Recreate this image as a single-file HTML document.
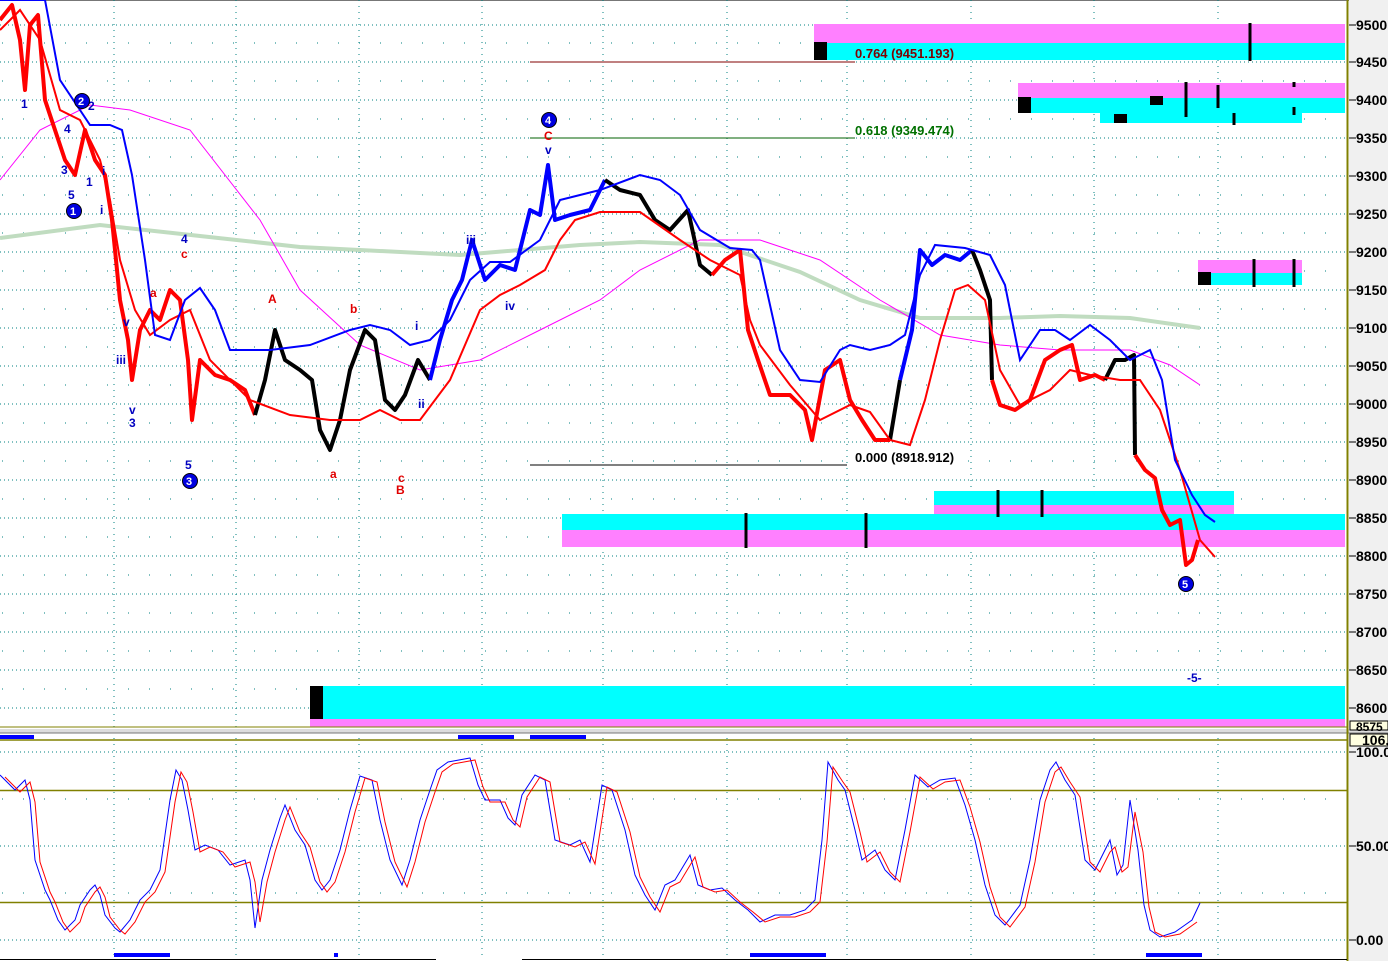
<!DOCTYPE html>
<html><head><meta charset="utf-8"><style>
html,body{margin:0;padding:0;background:#fff;width:1388px;height:961px;overflow:hidden}
svg{display:block;font-family:"Liberation Sans",sans-serif}
</style></head><body>
<svg width="1388" height="961" viewBox="0 0 1388 961" xmlns="http://www.w3.org/2000/svg">
<rect x="0" y="0" width="1388" height="961" fill="#fff"/>
<rect x="1349" y="0" width="39" height="961" fill="#f0f0f0"/>
<line x1="0" y1="0.5" x2="1349" y2="0.5" stroke="#777" stroke-width="1"/>
<g stroke="#008080" stroke-width="1" stroke-dasharray="1,3">
<line x1="0" y1="25" x2="1345" y2="25"/><line x1="0" y1="62" x2="1345" y2="62"/><line x1="0" y1="100" x2="1345" y2="100"/><line x1="0" y1="138" x2="1345" y2="138"/><line x1="0" y1="176" x2="1345" y2="176"/><line x1="0" y1="214" x2="1345" y2="214"/><line x1="0" y1="252" x2="1345" y2="252"/><line x1="0" y1="290" x2="1345" y2="290"/><line x1="0" y1="328" x2="1345" y2="328"/><line x1="0" y1="366" x2="1345" y2="366"/><line x1="0" y1="404" x2="1345" y2="404"/><line x1="0" y1="442" x2="1345" y2="442"/><line x1="0" y1="480" x2="1345" y2="480"/><line x1="0" y1="518" x2="1345" y2="518"/><line x1="0" y1="556" x2="1345" y2="556"/><line x1="0" y1="594" x2="1345" y2="594"/><line x1="0" y1="632" x2="1345" y2="632"/><line x1="0" y1="670" x2="1345" y2="670"/><line x1="0" y1="708" x2="1345" y2="708"/>
<line x1="0" y1="752" x2="1345" y2="752"/><line x1="0" y1="846" x2="1345" y2="846"/><line x1="0" y1="940" x2="1345" y2="940"/>
</g>
<g stroke="#008080" stroke-width="1" stroke-dasharray="1,5">
<line x1="114" y1="0" x2="114" y2="958"/><line x1="236" y1="0" x2="236" y2="958"/><line x1="359" y1="0" x2="359" y2="958"/><line x1="482" y1="0" x2="482" y2="958"/><line x1="603" y1="0" x2="603" y2="958"/><line x1="727" y1="0" x2="727" y2="958"/><line x1="847" y1="0" x2="847" y2="958"/><line x1="971" y1="0" x2="971" y2="958"/><line x1="1094" y1="0" x2="1094" y2="958"/><line x1="1218" y1="0" x2="1218" y2="958"/>
</g>
<g stroke="#008080" stroke-width="1" stroke-dasharray="1,20">
<line x1="2" y1="43" x2="1345" y2="43"/><line x1="2" y1="81" x2="1345" y2="81"/><line x1="2" y1="119" x2="1345" y2="119"/><line x1="2" y1="157" x2="1345" y2="157"/><line x1="2" y1="195" x2="1345" y2="195"/><line x1="2" y1="233" x2="1345" y2="233"/><line x1="2" y1="271" x2="1345" y2="271"/><line x1="2" y1="309" x2="1345" y2="309"/><line x1="2" y1="347" x2="1345" y2="347"/><line x1="2" y1="385" x2="1345" y2="385"/><line x1="2" y1="423" x2="1345" y2="423"/><line x1="2" y1="461" x2="1345" y2="461"/><line x1="2" y1="499" x2="1345" y2="499"/><line x1="2" y1="537" x2="1345" y2="537"/><line x1="2" y1="575" x2="1345" y2="575"/><line x1="2" y1="613" x2="1345" y2="613"/><line x1="2" y1="651" x2="1345" y2="651"/><line x1="2" y1="689" x2="1345" y2="689"/>
<line x1="2" y1="799" x2="1345" y2="799"/><line x1="2" y1="893" x2="1345" y2="893"/>
</g>
<rect x="814" y="24" width="531" height="19" fill="#ff80ff"/><rect x="814" y="43" width="531" height="17" fill="#00ffff"/><rect x="814" y="42" width="13" height="18" fill="#000"/>
<line x1="1250" y1="23" x2="1250" y2="61" stroke="#000" stroke-width="3"/>
<rect x="1018" y="83" width="327" height="15" fill="#ff80ff"/><rect x="1030" y="98" width="315" height="15" fill="#00ffff"/><rect x="1100" y="113" width="202" height="10" fill="#00ffff"/>
<rect x="1018" y="97" width="13" height="16" fill="#000"/><rect x="1150" y="96" width="13" height="9" fill="#000"/><rect x="1114" y="114" width="13" height="9" fill="#000"/>
<g stroke="#000" stroke-width="3"><line x1="1186" y1="82" x2="1186" y2="117"/><line x1="1218" y1="85" x2="1218" y2="108"/><line x1="1234" y1="113" x2="1234" y2="125"/><line x1="1294" y1="82" x2="1294" y2="87"/><line x1="1294" y1="107" x2="1294" y2="115"/></g>
<rect x="1198" y="260" width="104" height="13" fill="#ff80ff"/><rect x="1210" y="273" width="92" height="12" fill="#00ffff"/><rect x="1198" y="272" width="13" height="13" fill="#000"/>
<g stroke="#000" stroke-width="3"><line x1="1254" y1="259" x2="1254" y2="287"/><line x1="1294" y1="259" x2="1294" y2="287"/></g>
<rect x="934" y="491" width="300" height="14" fill="#00ffff"/><rect x="934" y="505" width="300" height="10" fill="#ff80ff"/>
<rect x="562" y="514" width="783" height="16" fill="#00ffff"/><rect x="562" y="530" width="783" height="17" fill="#ff80ff"/>
<g stroke="#000" stroke-width="3"><line x1="998" y1="490" x2="998" y2="517"/><line x1="1042" y1="490" x2="1042" y2="517"/><line x1="746" y1="513" x2="746" y2="548"/><line x1="866" y1="513" x2="866" y2="548"/></g>
<rect x="310" y="686" width="1035" height="33" fill="#00ffff"/><rect x="310" y="719" width="1035" height="8" fill="#ff80ff"/><rect x="310" y="686" width="13" height="33" fill="#000"/>
<line x1="530" y1="62" x2="855" y2="62" stroke="#800000" stroke-width="1"/>
<line x1="530" y1="138" x2="855" y2="138" stroke="#006000" stroke-width="1"/>
<line x1="530" y1="465" x2="847" y2="465" stroke="#000" stroke-width="1"/>
<g font-size="13" font-weight="bold">
<text x="855" y="58" fill="#800000">0.764 (9451.193)</text>
<text x="855" y="135" fill="#007000">0.618 (9349.474)</text>
<text x="855" y="462" fill="#000">0.000 (8918.912)</text>
</g>
<polyline fill="none" stroke="#c0dcc0" stroke-width="4" points="0,238 100,225 200,236 300,247 460,255 580,245 640,242 720,245 800,272 860,300 920,318 1000,318 1060,316 1130,318 1200,328"/>
<polyline fill="none" stroke="#ff00ff" stroke-width="1" points="0,180 40,130 90,105 130,110 190,130 260,220 300,290 360,345 420,370 480,360 540,330 600,300 640,270 700,240 760,240 820,260 880,300 940,335 1000,345 1060,350 1130,350 1170,365 1200,385"/>
<g fill="none" stroke-width="4" stroke-linejoin="round">
<polyline stroke="#ff0000" points="0,20 12,5 20,40 25,90 30,25 38,15 45,100 55,130 65,160 75,175 85,130 95,160 105,175 112,220 120,300 128,340 132,380 140,330 150,310 160,320 170,290 180,300 188,360 192,420 200,360 215,375 230,380 245,390 255,415"/>
<polyline stroke="#000" points="255,415 265,380 275,330 285,360 300,370 312,380 320,430 330,450 340,420 350,370 365,330 375,340 385,400 395,410 405,395 418,360 430,380"/>
<polyline stroke="#0000ff" points="430,380 440,340 452,300 462,280 472,240 485,280 500,265 515,270 530,210 540,215 548,165 555,220 570,215 590,210 605,180"/>
<polyline stroke="#000" points="605,180 620,190 640,195 655,220 670,230 688,210 700,265 712,275"/>
<polyline stroke="#ff0000" points="712,275 725,260 740,250 748,330 758,360 770,395 790,395 805,410 812,440 825,370 840,360 850,400 862,420 875,440 890,440"/>
<polyline stroke="#000" points="890,440 900,380"/>
<polyline stroke="#0000ff" points="900,380 912,330 920,250 932,265 945,255 960,260 972,250"/>
<polyline stroke="#000" points="972,250 980,270 990,300 992,380"/>
<polyline stroke="#ff0000" points="992,380 1000,405 1015,410 1030,400 1045,360 1060,350 1072,345 1080,380 1095,375 1105,380"/>
<polyline stroke="#000" points="1105,380 1115,360 1125,360 1134,355 1135,455"/>
<polyline stroke="#ff0000" points="1135,455 1145,470 1155,478 1162,510 1170,525 1180,520 1186,565 1192,560 1198,540"/>
</g>
<polyline fill="none" stroke="#ff0000" stroke-width="2" points="0,30 20,10 40,40 60,110 80,120 100,160 110,200 120,260 135,310 150,335 170,320 190,310 210,360 250,400 290,415 330,420 360,420 380,410 400,420 420,420 450,380 480,310 500,295 520,285 545,270 560,240 575,220 600,212 640,212 680,240 710,260 740,275 750,320 760,345 790,385 820,420 850,405 870,412 890,440 910,445 925,400 940,340 955,290 968,285 985,300 1000,370 1020,405 1050,390 1070,370 1090,375 1120,380 1140,380 1160,410 1180,470 1200,540 1215,557"/>
<polyline fill="none" stroke="#0000ff" stroke-width="2" points="0,0 45,0 60,80 90,125 110,125 122,130 132,175 145,260 155,335 170,340 185,300 200,288 215,310 230,350 270,350 310,345 350,330 370,325 390,330 410,345 430,340 450,320 470,280 490,262 510,262 540,240 560,200 580,195 600,190 640,175 660,180 680,195 700,230 730,248 752,250 760,260 780,350 800,380 820,382 840,350 850,345 870,350 890,345 905,335 920,275 935,245 965,248 990,255 1005,285 1020,360 1040,330 1055,330 1070,340 1090,325 1110,340 1130,360 1150,350 1162,380 1175,460 1192,495 1205,515 1215,522"/>
<g font-size="12" font-weight="bold" fill="#0000c0">
<text x="21" y="108">1</text><text x="64" y="133">4</text><text x="61" y="174">3</text><text x="68" y="199">5</text><text x="86" y="186">1</text><text x="88" y="110">2</text><text x="102" y="175">i</text><text x="100" y="214">i</text><text x="123" y="326">v</text><text x="116" y="364">iii</text><text x="129" y="414">v</text><text x="129" y="427">3</text><text x="181" y="243">4</text><text x="185" y="469">5</text><text x="466" y="244">iii</text><text x="505" y="310">iv</text><text x="545" y="154">v</text><text x="415" y="330">i</text><text x="418" y="408">ii</text><text x="1187" y="682">-5-</text>
</g>
<g font-size="12" font-weight="bold" fill="#e00000">
<text x="268" y="303">A</text><text x="350" y="313">b</text><text x="330" y="478">a</text><text x="398" y="482">c</text><text x="396" y="494">B</text><text x="181" y="258">c</text><text x="150" y="297">a</text><text x="544" y="140">C</text>
</g>
<g font-size="11" font-weight="bold" fill="#fff">
<circle cx="74" cy="211" r="7.5" fill="#0000e0" stroke="#000"/><text x="70" y="215">1</text>
<circle cx="82" cy="101" r="7.5" fill="#0000e0" stroke="#000"/><text x="78" y="105">2</text>
<circle cx="190" cy="481" r="7.5" fill="#0000e0" stroke="#000"/><text x="186" y="485">3</text>
<circle cx="549" cy="120" r="7.5" fill="#0000e0" stroke="#000"/><text x="545" y="124">4</text>
<circle cx="1186" cy="584" r="7.5" fill="#0000e0" stroke="#000"/><text x="1182" y="588">5</text>
</g>
<line x1="0" y1="727" x2="1347" y2="727" stroke="#808000" stroke-width="1"/>
<rect x="0" y="729" width="1388" height="4" fill="#ddd"/><line x1="0" y1="733" x2="1388" y2="733" stroke="#777"/>
<line x1="0" y1="740" x2="1347" y2="740" stroke="#808000" stroke-width="1.5"/>
<line x1="0" y1="790.5" x2="1347" y2="790.5" stroke="#808000" stroke-width="1.5"/>
<line x1="0" y1="902.5" x2="1347" y2="902.5" stroke="#808000" stroke-width="1.5"/>
<line x1="1347.5" y1="0" x2="1347.5" y2="961" stroke="#808000" stroke-width="2"/>
<g fill="#0000ff"><rect x="0" y="735" width="34" height="4"/><rect x="458" y="735" width="56" height="4"/><rect x="530" y="735" width="56" height="4"/>
<rect x="114" y="953" width="56" height="4"/><rect x="334" y="953" width="4" height="4"/><rect x="750" y="953" width="76" height="4"/><rect x="1146" y="953" width="56" height="4"/></g>
<g stroke="#000" stroke-width="1"><line x1="0" y1="959.5" x2="436" y2="959.5"/><line x1="522" y1="959.5" x2="1347" y2="959.5"/></g>
<polyline fill="none" stroke="#0000ff" stroke-width="1" points="0,775 8,783 15,790 25,780 30,800 35,860 45,890 50,900 58,920 65,930 75,920 80,905 90,890 95,885 100,895 105,915 115,928 120,932 130,920 140,900 150,890 160,870 170,800 176,770 182,780 188,810 195,850 205,845 218,850 230,865 245,860 250,880 255,928 262,880 270,850 280,818 285,805 295,830 305,845 315,880 322,890 330,880 340,850 350,810 360,776 372,780 380,820 390,860 402,885 410,860 420,820 430,790 437,770 448,762 470,758 478,785 485,800 500,800 508,818 515,825 522,795 535,775 545,780 555,840 570,845 580,840 590,862 602,785 612,790 625,830 635,875 645,895 655,910 665,885 675,880 690,855 698,885 710,890 722,888 735,900 748,910 760,922 775,915 790,915 805,910 815,900 822,840 828,762 838,780 845,790 855,830 862,860 875,850 885,870 895,880 905,830 915,775 928,787 940,780 955,778 965,805 975,840 985,885 995,915 1005,925 1020,905 1030,860 1040,800 1050,770 1056,762 1065,780 1075,795 1085,860 1095,870 1105,850 1110,840 1117,875 1123,865 1130,800 1138,850 1144,905 1150,930 1160,937 1175,932 1185,925 1192,920 1200,903"/>
<polyline fill="none" stroke="#ff0000" stroke-width="1" transform="translate(5,2)" points="0,775 8,783 15,790 25,780 30,800 35,860 45,890 50,900 58,920 65,930 75,920 80,905 90,890 95,885 100,895 105,915 115,928 120,932 130,920 140,900 150,890 160,870 170,800 176,770 182,780 188,810 195,850 205,845 218,850 230,865 245,860 250,880 255,920 262,880 270,850 280,818 285,805 295,830 305,845 315,880 322,890 330,880 340,850 350,810 360,776 372,780 380,820 390,860 402,885 410,860 420,820 430,790 437,770 448,762 470,758 478,785 485,800 500,800 508,818 515,825 522,795 535,775 545,780 555,840 570,845 580,840 590,862 602,785 612,790 625,830 635,875 645,895 655,910 665,885 675,880 690,855 698,885 710,890 722,888 735,900 748,910 760,920 775,915 790,915 805,910 815,900 822,840 828,765 838,780 845,790 855,830 862,860 875,850 885,870 895,880 905,830 915,775 928,787 940,780 955,778 965,805 975,840 985,885 995,915 1005,925 1020,905 1030,860 1040,800 1050,770 1056,765 1065,780 1075,795 1085,860 1095,870 1105,850 1110,845 1117,870 1123,865 1130,810 1138,850 1144,905 1150,930 1160,935 1175,932 1185,925 1192,920"/>
<g font-size="14" font-weight="bold" fill="#000">
<g stroke="#000" stroke-width="1">
<line x1="1349" y1="25" x2="1356" y2="25"/><line x1="1349" y1="62" x2="1356" y2="62"/><line x1="1349" y1="100" x2="1356" y2="100"/><line x1="1349" y1="138" x2="1356" y2="138"/><line x1="1349" y1="176" x2="1356" y2="176"/><line x1="1349" y1="214" x2="1356" y2="214"/><line x1="1349" y1="252" x2="1356" y2="252"/><line x1="1349" y1="290" x2="1356" y2="290"/><line x1="1349" y1="328" x2="1356" y2="328"/><line x1="1349" y1="366" x2="1356" y2="366"/><line x1="1349" y1="404" x2="1356" y2="404"/><line x1="1349" y1="442" x2="1356" y2="442"/><line x1="1349" y1="480" x2="1356" y2="480"/><line x1="1349" y1="518" x2="1356" y2="518"/><line x1="1349" y1="556" x2="1356" y2="556"/><line x1="1349" y1="594" x2="1356" y2="594"/><line x1="1349" y1="632" x2="1356" y2="632"/><line x1="1349" y1="670" x2="1356" y2="670"/><line x1="1349" y1="708" x2="1356" y2="708"/><line x1="1349" y1="752" x2="1356" y2="752"/><line x1="1349" y1="846" x2="1356" y2="846"/><line x1="1349" y1="940" x2="1356" y2="940"/>
</g>
<text x="1356" y="30">9500.</text><text x="1356" y="67">9450.</text><text x="1356" y="105">9400.</text><text x="1356" y="143">9350.</text><text x="1356" y="181">9300.</text><text x="1356" y="219">9250.</text><text x="1356" y="257">9200.</text><text x="1356" y="295">9150.</text><text x="1356" y="333">9100.</text><text x="1356" y="371">9050.</text><text x="1356" y="409">9000.</text><text x="1356" y="447">8950.</text><text x="1356" y="485">8900.</text><text x="1356" y="523">8850.</text><text x="1356" y="561">8800.</text><text x="1356" y="599">8750.</text><text x="1356" y="637">8700.</text><text x="1356" y="675">8650.</text><text x="1356" y="713">8600.</text>
<rect x="1350" y="721" width="38" height="9" fill="#ffffe0" stroke="#000"/><text x="1356" y="731" font-size="12">8575</text>
<rect x="1350" y="734" width="38" height="12" fill="#ffffe0" stroke="#000"/><text x="1362" y="745">106.8</text>
<text x="1356" y="757">100.0</text><text x="1356" y="851">50.00</text><text x="1356" y="945">0.00</text>
</g>
</svg>
</body></html>
